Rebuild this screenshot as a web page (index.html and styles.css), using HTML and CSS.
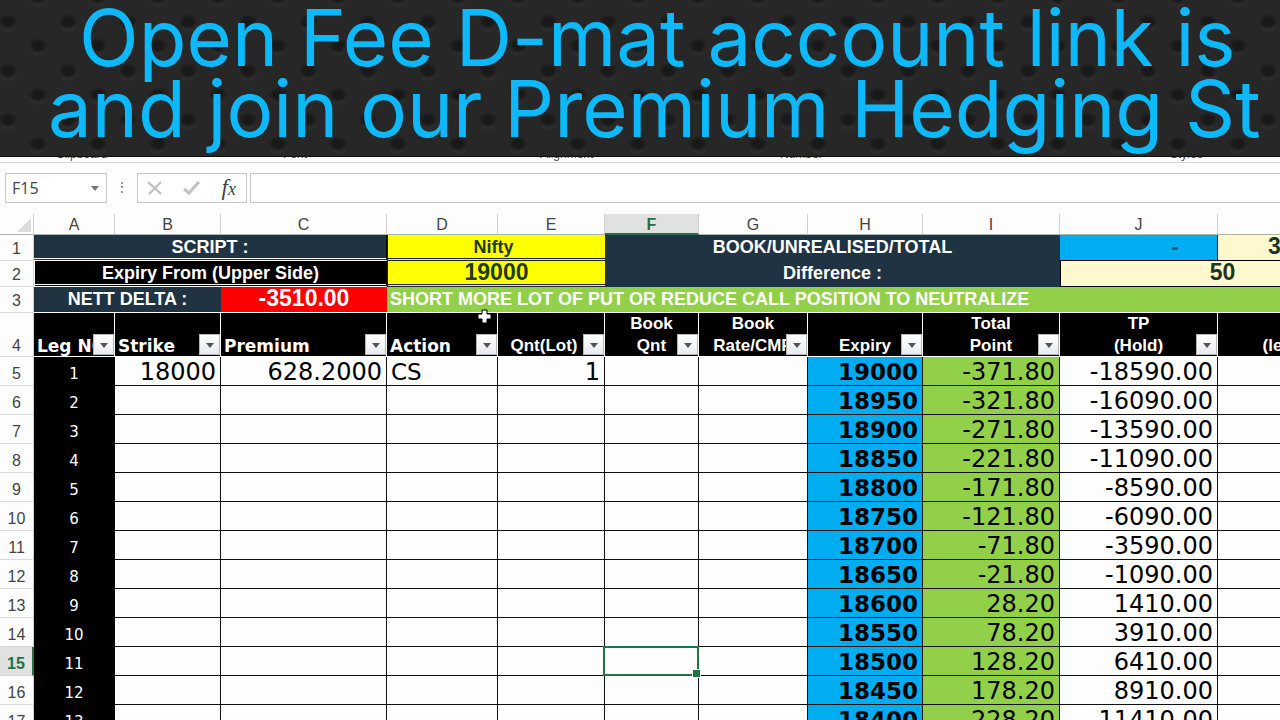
FILE: index.html
```html
<!DOCTYPE html>
<html lang="en">
<head>
<meta charset="utf-8">
<title>Option hedging sheet</title>
<link rel="stylesheet" href="styles.css">
</head>
<body>
<header class="banner">
  <p class="banner-line first">Open Fee D-mat account link is</p>
  <p class="banner-line">and join our Premium Hedging St</p>
</header>
<div class="ribbon" aria-hidden="true">
  <span class="g1">Clipboard</span><span class="g2">Font</span><span class="g3">Alignment</span><span class="g4">Number</span><span class="g5">Styles</span>
</div>
<div class="formula-bar">
  <div class="name-box">
    <input type="text" value="F15" aria-label="Name box">
    <button type="button" aria-label="Open name list"><svg width="8" height="5" viewBox="0 0 8 5"><path d="M0 0h8L4 5z" fill="#777"/></svg></button>
  </div>
  <svg class="grip" width="3" height="12" viewBox="0 0 3 12"><path d="M0 0h2v2H0zM0 4h2v2H0zM0 9h2v2H0z" fill="#999"/></svg>
  <div class="tools">
    <button type="button" aria-label="Cancel"><svg width="16" height="14" viewBox="0 0 16 14"><path d="M1 1l13 12M14 1L2 13" fill="none" stroke="#bdbdbd" stroke-width="2"/></svg></button>
    <button type="button" aria-label="Enter"><svg width="18" height="14" viewBox="0 0 18 14"><path d="M1 8l5 4L16 1" fill="none" stroke="#c0c0c0" stroke-width="3"/></svg></button>
    <button type="button" class="fx" aria-label="Insert function">f<small>x</small></button>
  </div>
  <input class="formula" type="text" aria-label="Formula">
</div>
<main class="sheet">
  <table>
    <colgroup><col class="c-n"><col class="c-a"><col class="c-b"><col class="c-c"><col class="c-d"><col class="c-e"><col class="c-f"><col class="c-g"><col class="c-h"><col class="c-i"><col class="c-j"><col class="c-k"></colgroup>
    <thead>
      <tr class="letters"><th class="corner"><svg width="14" height="14" viewBox="0 0 14 14"><path d="M14 0v14H0z" fill="#dcdcdc"/></svg></th><th>A</th><th>B</th><th>C</th><th>D</th><th>E</th><th class="current">F</th><th>G</th><th>H</th><th>I</th><th>J</th><th></th></tr>
    </thead>
    <tbody id="rows">
      <tr class="top"><th>1</th><td colspan="3" class="navy boxed">SCRIPT :</td><td colspan="2" class="yellow name">Nifty</td><td colspan="4" class="navy">BOOK/UNREALISED/TOTAL</td><td class="blue dash">-</td><td class="cream big left">3510</td></tr>
      <tr class="top"><th>2</th><td colspan="3" class="black boxed">Expiry From (Upper Side)</td><td colspan="2" class="yellow big">19000</td><td colspan="4" class="navy">Difference :</td><td colspan="2" class="cream big">50</td></tr>
      <tr class="top third"><th>3</th><td colspan="2" class="navy">NETT DELTA :</td><td class="red big">-3510.00</td><td colspan="8" class="green">SHORT MORE LOT OF PUT OR REDUCE CALL POSITION TO NEUTRALIZE</td></tr>
      <tr class="heads"><th>4</th>
        <td class="wide">Leg NO<button type="button" aria-label="Filter Leg NO"></button></td>
        <td class="wide">Strike<button type="button" aria-label="Filter Strike"></button></td>
        <td class="wide">Premium<button type="button" aria-label="Filter Premium"></button></td>
        <td class="wide">Action<button type="button" aria-label="Filter Action"></button></td>
        <td class="shift">Qnt(Lot)<button type="button" aria-label="Filter Quantity"></button></td>
        <td>Book<br>Qnt<button type="button" aria-label="Filter Book Qnt"></button></td>
        <td>Book<br>Rate/CMP<button type="button" aria-label="Filter Book Rate"></button></td>
        <td>Expiry<button type="button" aria-label="Filter Expiry"></button></td>
        <td>Total<br>Point<button type="button" aria-label="Filter Total Point"></button></td>
        <td>TP<br>(Hold)<button type="button" aria-label="Filter TP"></button></td>
        <td class="last">(less Brok)</td></tr>
    </tbody>
  </table>
  <svg class="pointer" width="15" height="15" viewBox="0 0 15 15"><path d="M5 1h5v4h4v5h-4v4H5v-4H1V5h4z" fill="#fff" stroke="#000"/></svg>
</main>
<script src="sheet.js"></script>
</body>
</html>
```
FILE: styles.css
```css
* { box-sizing: border-box; }
body { margin: 0; height: 100vh; overflow: hidden; display: flex; flex-direction: column; background: #fdfdfd; font-family: "Liberation Sans", Arial, sans-serif; color: #444; }
button, input { font: inherit; color: inherit; border: 0; padding: 0; margin: 0; background: none; }
svg { display: block; }

.banner {
  flex: none; height: 157px; padding-top: 2px; overflow: hidden; border-bottom: 1px solid #111;
  background-color: #272727;
  background-image:
    radial-gradient(ellipse 10px 8px at 8px 12px, #191919 50%, transparent 100%),
    radial-gradient(ellipse 10px 8px at 8px 15px, #303030 50%, transparent 100%),
    radial-gradient(ellipse 10px 8px at 38px 36px, #191919 50%, transparent 100%),
    radial-gradient(ellipse 10px 8px at 38px 39px, #303030 50%, transparent 100%);
  background-size: 60px 49px;
  background-position: 0 10px;
}
.banner-line { margin: 0; padding-left: 48px; font: 78px/71px Inter, Roboto, sans-serif; color: #0db9fb; white-space: nowrap; }
.banner-line.first { padding-left: 79px; }

.ribbon { flex: none; display: flex; height: 6px; border-bottom: 1px solid #d4d4d4; overflow: hidden; font-size: 12px; line-height: 12px; }
.ribbon span { display: block; margin-top: -9px; }
.g1 { width: 227px; padding-left: 56px; }
.g2 { width: 257px; padding-left: 56px; }
.g3 { width: 240px; padding-left: 56px; }
.g4 { width: 390px; padding-left: 56px; }
.g5 { padding-left: 56px; }

.formula-bar { flex: none; display: flex; height: 51px; padding: 10px 0 11px 5px; }
.name-box, .tools, .formula { border: 1px solid #c6c6c6; background: #fff; }
.name-box { display: flex; align-items: center; width: 102px; padding: 0 7px 0 6px; font: 16px "Open Sans", sans-serif; }
.name-box input { flex: 1; min-width: 0; }
.grip { margin: 9px 13px 0 14px; }
.tools { display: flex; align-items: center; justify-content: space-between; width: 110px; padding: 0 10px 0 9px; }
.fx { font: italic 23px/24px "Liberation Serif", serif; color: #444; }
.fx small { font-size: 18px; }
.formula { flex: 1; min-width: 0; margin-left: 3px; border-right: 0; }

.sheet { position: relative; flex: 1; overflow: hidden; }
table { width: 1384px; table-layout: fixed; border-collapse: separate; border-spacing: 0; }
.c-n { width: 34px; } .c-a { width: 81px; } .c-b { width: 106px; } .c-c { width: 166px; }
.c-d { width: 111px; } .c-e { width: 107px; } .c-f { width: 94px; } .c-g { width: 109px; }
.c-h { width: 115px; } .c-i { width: 137px; } .c-j { width: 158px; } .c-k { width: 166px; }
th, td { padding: 0; white-space: nowrap; overflow: hidden; }
th { font-size: 16px; font-weight: normal; border-right: 1px solid #d0d0d0; border-bottom: 1px solid #d9d9d9; color: #444; }
.letters th { height: 21px; padding-top: 2px; line-height: 18px; border-bottom-color: #a9b5a9; }
.letters .current { background: #e1e1e1; color: #217346; font-weight: bold; line-height: 17px; border-bottom: 2px solid #217346; }
.corner svg { margin: 0 0 0 17px; }

.top td { height: 26px; line-height: 23px; font-size: 18px; font-weight: bold; text-align: center; color: #fff; }
.top th { padding-top: 2px; line-height: 22px; }
.top .navy, .top .boxed, .top .green, .top .name { padding-top: 2px; line-height: 21px; vertical-align: top; }
.navy { background: #1f3342; }
.black { background: #000; }
.boxed { border-right: 1px solid #000; border-bottom: 3px double #fff; }
.black.boxed { border-left: 1px solid #fff; }
.top .yellow { background: #ff0; color: #1f3a1c; border: 1px solid #222; border-width: 0 0 3px 1px; border-bottom-style: double; }
.top .name { padding-right: 6px; }
.top .big { font-size: 23px; line-height: 22px; vertical-align: top; }
.blue { background: #00adf0; }
.top .dash { color: #1b5c8c; text-align: right; padding-right: 38px; font-size: 23px; border-right: 1px solid #000; border-bottom: 1px solid #000; }
.top .cream { background: #fdf8cd; color: #1f3325; border-bottom: 1px solid #000; border-left: 1px solid #000; }
.top .left { text-align: left; padding-left: 50px; border-left: 0; }
.third td { border-bottom: 1px solid #fff; }
.red { background: #f00; }
.green { background: #92d04a; }
.top .green { text-align: left; padding-left: 3px; }

.heads td { position: relative; height: 44px; background: #000; color: #fff; border-right: 1px solid #fff; box-shadow: inset 0 -1px #fff; font-size: 17px; font-weight: bold; line-height: 22px; text-align: center; vertical-align: bottom; }
.heads .wide { font-family: "DejaVu Sans", Verdana, sans-serif; text-align: left; padding-left: 3px; }
.heads .shift { padding-right: 14px; }
.heads .last { padding-left: 12px; }
.heads th { vertical-align: bottom; line-height: 21px; }
.heads button { position: absolute; right: 0; bottom: 2px; width: 21px; height: 21px; background: linear-gradient(#fff, #e8ebf0); border: 1px solid #b5b5b5; }
.heads button::after { content: ""; position: absolute; left: 6px; top: 8px; border: 4px solid transparent; border-top: 5px solid #555; border-bottom: 0; }

.data td { height: 29px; border-right: 1px solid #111; border-bottom: 1px solid #111; padding: 2px 4px 0; font: 24px/26px "DejaVu Sans", Verdana, sans-serif; color: #000; text-align: right; }
.data th { padding-top: 6px; line-height: 22px; }
.data .leg { background: #000; border-color: #000; color: #fff; font-size: 15px; text-align: center; padding-top: 7px; line-height: 21px; }
.data .action { text-align: left; font-size: 23px; }
.data .expiry { background: #00adf0; font-size: 23px; font-weight: bold; }
.data .point { background: #92d04a; }
.data .current { background: #e1e1e1; color: #217346; font-weight: bold; border-right: 2px solid #217346; }
.data .selected { position: relative; overflow: visible; }
.selected::before { content: ""; position: absolute; inset: -1px -1px -1px -2px; border: 2px solid #217346; }
.selected::after { content: ""; position: absolute; right: -3px; bottom: -3px; width: 7px; height: 7px; background: #217346; border: 1px solid #fff; }
.pointer { position: absolute; left: 477px; top: 95px; }
```
FILE: sheet.js
```js
const body = document.getElementById('rows');
for (let i = 0; i < 13; i++) {
  const points = -371.8 + i * 50;
  const first = i === 0;
  const row = document.createElement('tr');
  row.className = 'data';
  row.innerHTML =
    `<th class="${i === 10 ? 'current' : ''}">${i + 5}</th>` +
    `<td class="leg">${i + 1}</td>` +
    `<td>${first ? '18000' : ''}</td>` +
    `<td>${first ? '628.2000' : ''}</td>` +
    `<td class="action">${first ? 'CS' : ''}</td>` +
    `<td>${first ? '1' : ''}</td>` +
    `<td class="${i === 10 ? 'selected' : ''}"></td><td></td>` +
    `<td class="expiry">${19000 - i * 50}</td>` +
    `<td class="point">${points.toFixed(2)}</td>` +
    `<td>${(points * 50).toFixed(2)}</td><td></td>`;
  body.append(row);
}
```
